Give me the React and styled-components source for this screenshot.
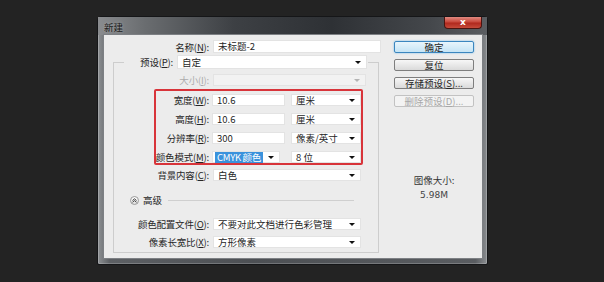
import React from "react";
import styled, { createGlobalStyle } from "styled-components";

const GlobalStyle = createGlobalStyle`
  body {
    margin: 0;
    background: #232323;
    font-family: "Noto Sans CJK SC", "Noto Sans", sans-serif;
    font-size: 9.5px;
    color: #262626;
  }
`;

const Dialog = styled.div`
  margin: 16px 0 0 97px;
  width: 391px;
  height: 249px;
  box-sizing: border-box;
  padding: 0 5px 6px 6px;
  border: 1px solid #151618;
  border-radius: 4px 4px 2px 2px;
  background: linear-gradient(to right, #8d9093 0%, #5d6064 3%, #4d5054 40%, #5a5d61 97%, #8a8d90 100%);
  box-shadow: inset 0 0 0 1px rgba(255, 255, 255, 0.2);
  display: flex;
  flex-direction: column;
`;

const TitleBar = styled.div`
  height: 18px;
  display: flex;
  justify-content: space-between;
  align-items: center;
  margin: 0 -5px 0 -6px;
  padding: 0 5px 0 6px;
  background: linear-gradient(to right, #8a8c8f 0%, #6a6d70 12%, #3d4044 35%, #2e3135 60%, #44474b 85%, #5b5e62 100%);
`;

const Title = styled.span`
  font-size: 9.5px;
  line-height: 12px;
  color: #1a1a1a;
  text-shadow: 0 0 3px rgba(255, 255, 255, 0.35);
  margin-top: 1px;
`;

const CloseButton = styled.div`
  align-self: flex-start;
  width: 36px;
  height: 11px;
  border: 1px solid #4a1410;
  border-top: none;
  border-radius: 0 0 4px 4px;
  background: linear-gradient(to bottom, #e08a80 0%, #c8483c 45%, #b0291e 55%, #c54a3a 100%);
  color: #fff;
  font-family: "DejaVu Sans", sans-serif;
  font-size: 9px;
  font-weight: bold;
  line-height: 10px;
  text-align: center;
`;

const Body = styled.div`
  flex: 1;
  display: flex;
  background: #ececec;
  box-shadow: 0 0 0 1px #7d8084;
  padding-top: 5px;
`;

const LeftPane = styled.div`
  width: 277px;
`;

const RightPane = styled.div`
  margin-left: 13px;
  width: 80px;
  padding-top: 1px;
  display: flex;
  flex-direction: column;
  gap: 6px;
`;

const Row = styled.div`
  display: flex;
  align-items: center;
  height: ${(p) => p.$h || 13}px;
  margin-top: ${(p) => p.$mt || 0}px;
`;

const Label = styled.label`
  width: ${(p) => p.$w}px;
  margin-right: ${(p) => (p.$gap != null ? p.$gap : 4)}px;
  flex-shrink: 0;
  display: flex;
  justify-content: flex-end;
  white-space: nowrap;
  line-height: 12px;
  letter-spacing: -0.2px;
  color: ${(p) => (p.$disabled ? "#adadad" : "#262626")};
  u {
    text-decoration-thickness: 1px;
    text-underline-offset: 1px;
  }
`;

const Field = styled.div`
  width: ${(p) => p.$w}px;
  height: 100%;
  box-sizing: border-box;
  flex-shrink: 0;
  background: #fff;
  border: 1px solid #e3e3e3;
  padding-left: 4px;
  line-height: 11px;
  display: flex;
  align-items: center;
  white-space: nowrap;
`;

const Select = styled(Field)`
  position: relative;
  margin-left: ${(p) => (p.$push ? "auto" : "0")};
  background: ${(p) => (p.$disabled ? "#f2f2f2" : "#fff")};
  &::after {
    content: "";
    position: absolute;
    right: 5px;
    top: 50%;
    margin-top: -1px;
    border-left: 3px solid transparent;
    border-right: 3px solid transparent;
    border-top: 3px solid ${(p) => (p.$disabled ? "#b4b4b4" : "#111")};
  }
`;

const Selected = styled.span`
  background: #3a92dc;
  color: #fff;
  padding: 0 2px;
  margin-left: -2px;
  line-height: 11px;
  letter-spacing: -0.3px;
`;

const Group = styled.fieldset`
  margin: 2px 0 0 9px;
  padding: 0 0 4px 0;
  width: 266px;
  box-sizing: border-box;
  border: 1px solid #cdcdcd;
  min-width: 0;
`;

const Legend = styled.legend`
  margin-left: 10px;
  padding: 0 1px;
  height: 14px;
  display: flex;
  align-items: center;
`;

const Highlight = styled.div`
  margin: 3px 0 0 40px;
  width: 209px;
  height: 76px;
  box-sizing: border-box;
  border: 2px solid #d8343a;
  border-radius: 2px;
  padding-top: 3px;
  display: flex;
  flex-direction: column;
  gap: 7px;
`;

const Advanced = styled.div`
  display: flex;
  align-items: center;
  height: 10px;
  margin: 14px 24px 0 16px;
`;

const Toggle = styled.span`
  width: 9px;
  height: 9px;
  box-sizing: border-box;
  border-radius: 50%;
  border: 1px solid #9a9a9a;
  background: linear-gradient(#fdfdfd, #dedede);
  display: flex;
  align-items: center;
  justify-content: center;
  margin-right: 4px;
`;

const AdvancedText = styled.span`
  line-height: 12px;
  margin-right: 6px;
`;

const Rule = styled.div`
  flex: 1;
  height: 0;
  border-top: 1px solid #cfcfcf;
`;

const Button = styled.div`
  height: 12px;
  box-sizing: border-box;
  border: 1px solid ${(p) => (p.$primary ? "#3b86bf" : p.$disabled ? "#c2c2c2" : "#7e7e7e")};
  border-radius: 2px;
  background: ${(p) =>
    p.$primary
      ? "linear-gradient(#e8f5fc, #c5e4f5)"
      : p.$disabled
      ? "#f3f3f3"
      : "linear-gradient(#f7f7f7, #dadada)"};
  color: ${(p) => (p.$disabled ? "#a8a8a8" : "#262626")};
  text-align: center;
  line-height: 10px;
  font-size: 9.5px;
  box-shadow: ${(p) => (p.$primary ? "0 0 2px #6fb6e6" : "none")};
`;

const ImageSize = styled.div`
  margin-top: 60px;
  text-align: center;
  color: #333;
  line-height: 15px;
`;

const SizeValue = styled.div`
  font-family: "DejaVu Sans", sans-serif;
  font-size: 9px;
  color: #444;
`;

export default function App() {
  return (
    <>
      <GlobalStyle />
      <Dialog>
        <TitleBar>
          <Title>新建</Title>
          <CloseButton>x</CloseButton>
        </TitleBar>
        <Body>
          <LeftPane>
            <Row>
              <Label $w={105}>名称(<u>N</u>):</Label>
              <Field $w={168}>未标题-2</Field>
            </Row>
            <Group>
              <Legend>
                <Label $w={48}>预设(<u>P</u>):</Label>
                <Select $w={190}>自定</Select>
              </Legend>
              <Row $h={12} $mt={5}>
                <Label $w={95} $disabled>大小(<u>I</u>):</Label>
                <Select $w={153} $disabled />
              </Row>
              <Highlight>
                <Row $h={12}>
                  <Label $w={53} $gap={3}>宽度(<u>W</u>):</Label>
                  <Field $w={73}>10.6</Field>
                  <Select $w={70} $push>厘米</Select>
                </Row>
                <Row $h={12}>
                  <Label $w={53} $gap={3}>高度(<u>H</u>):</Label>
                  <Field $w={73}>10.6</Field>
                  <Select $w={70} $push>厘米</Select>
                </Row>
                <Row $h={12}>
                  <Label $w={53} $gap={3}>分辨率(<u>R</u>):</Label>
                  <Field $w={73}>300</Field>
                  <Select $w={70} $push>像素/英寸</Select>
                </Row>
                <Row $h={12}>
                  <Label $w={53} $gap={3}>颜色模式(<u>M</u>):</Label>
                  <Select $w={68}>
                    <Selected>CMYK 颜色</Selected>
                  </Select>
                  <Select $w={70} $push>8 位</Select>
                </Row>
              </Highlight>
              <Row $h={12} $mt={4}>
                <Label $w={95}>背景内容(<u>C</u>):</Label>
                <Select $w={148}>白色</Select>
              </Row>
              <Advanced>
                <Toggle>
                  <svg width="5" height="5" viewBox="0 0 5 5">
                    <path d="M0.5 2.5 L2.5 0.8 L4.5 2.5 M0.5 4.3 L2.5 2.6 L4.5 4.3" fill="none" stroke="#333" strokeWidth="0.9" />
                  </svg>
                </Toggle>
                <AdvancedText>高级</AdvancedText>
                <Rule />
              </Advanced>
              <Row $h={12} $mt={13}>
                <Label $w={95}>颜色配置文件(<u>O</u>):</Label>
                <Select $w={148}>不要对此文档进行色彩管理</Select>
              </Row>
              <Row $h={12} $mt={6}>
                <Label $w={95}>像素长宽比(<u>X</u>):</Label>
                <Select $w={148}>方形像素</Select>
              </Row>
            </Group>
          </LeftPane>
          <RightPane>
            <Button $primary>确定</Button>
            <Button>复位</Button>
            <Button>存储预设(<u>S</u>)...</Button>
            <Button $disabled>删除预设(<u>D</u>)...</Button>
            <ImageSize>
              图像大小:
              <SizeValue>5.98M</SizeValue>
            </ImageSize>
          </RightPane>
        </Body>
      </Dialog>
    </>
  );
}
